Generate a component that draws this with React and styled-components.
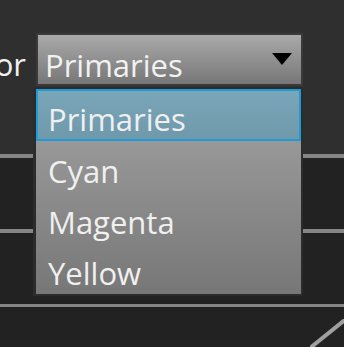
import React from "react";
import styled, { createGlobalStyle } from "styled-components";

const Global = createGlobalStyle`
  html, body { margin: 0; padding: 0; background: #222222; }
  body { font-family: "Open Sans", "Noto Sans", sans-serif; overflow: hidden; }
`;

const Page = styled.div`
  position: relative;
  width: 344px;
  height: 347px;
  overflow: hidden;
  display: flex;
  flex-direction: column;
  background: #222222;
`;

const TopSection = styled.div`
  height: 154px;
  background: #2f2f2f;
  display: flex;
  flex-direction: column;
`;

const Row = styled.div`
  display: flex;
  align-items: flex-start;
  margin-top: 33px;
  margin-left: -70px;
`;

const Label = styled.span`
  width: 96px;
  text-align: right;
  margin-right: 10px;
  margin-top: 5px;
  color: #f0f0f0;
  font-size: 31px;
  line-height: 52px;
`;

const Combo = styled.div`
  box-sizing: border-box;
  width: 267px;
  height: 53px;
  border: 2px solid #3a3a3a;
  background: linear-gradient(#a9a9a9, #777777);
  display: flex;
  align-items: center;
  justify-content: space-between;
  padding: 0 9px 0 7px;
  color: #f2f2f2;
  font-size: 31px;
`;

const ComboText = styled.span`
  line-height: 40px;
  margin-top: 10px;
`;

const Arrow = styled.svg`
  display: block;
  margin-top: -2px;
`;

const Line = styled.div`
  height: ${(p) => p.$h}px;
  background: #858585;
`;

const Band = styled.div`
  height: ${(p) => p.$h}px;
  background: #222222;
`;

const Bottom = styled.div`
  flex: 1;
  background: #222222;
  display: flex;
  justify-content: flex-end;
  align-items: flex-end;
`;

const Popup = styled.div`
  position: absolute;
  left: 33px;
  top: 87px;
  width: 270px;
  box-sizing: border-box;
  border: 2px solid #2c2c2c;
  border-left-width: 3px;
  background: linear-gradient(#a3a3a3, #777777);
  display: flex;
  flex-direction: column;
`;

const Item = styled.div`
  box-sizing: border-box;
  height: ${(p) => (p.$selected ? 52 : 51)}px;
  display: flex;
  align-items: center;
  padding-left: ${(p) => (p.$selected ? 10 : 12)}px;
  color: #f0f0f0;
  font-size: 31px;
  border: ${(p) => (p.$selected ? "2px solid #1f9bd8" : "none")};
  background: ${(p) =>
    p.$selected ? "linear-gradient(#7aa6b9, #6f99ab)" : "transparent"};
`;

const ItemText = styled.span`
  line-height: 40px;
  margin-top: 8px;
`;

export default function App() {
  const items = ["Primaries", "Cyan", "Magenta", "Yellow"];
  return (
    <>
      <Global />
      <Page>
        <TopSection>
          <Row>
            <Label>Color</Label>
            <Combo>
              <ComboText>Primaries</ComboText>
              <Arrow width="20" height="12" viewBox="0 0 20 12">
                <polygon points="0,0 20,0 10,12" fill="#000" />
              </Arrow>
            </Combo>
          </Row>
        </TopSection>
        <Line $h={4} />
        <Band $h={71} />
        <Line $h={4} />
        <Band $h={71} />
        <Line $h={3} />
        <Bottom>
          <svg width="34" height="28" viewBox="0 0 34 28">
            <line x1="0" y1="29" x2="36" y2="0" stroke="#a0a0a0" strokeWidth="4" />
          </svg>
        </Bottom>
        <Popup>
          {items.map((t, i) => (
            <Item key={t} $selected={i === 0}>
              <ItemText>{t}</ItemText>
            </Item>
          ))}
        </Popup>
      </Page>
    </>
  );
}
